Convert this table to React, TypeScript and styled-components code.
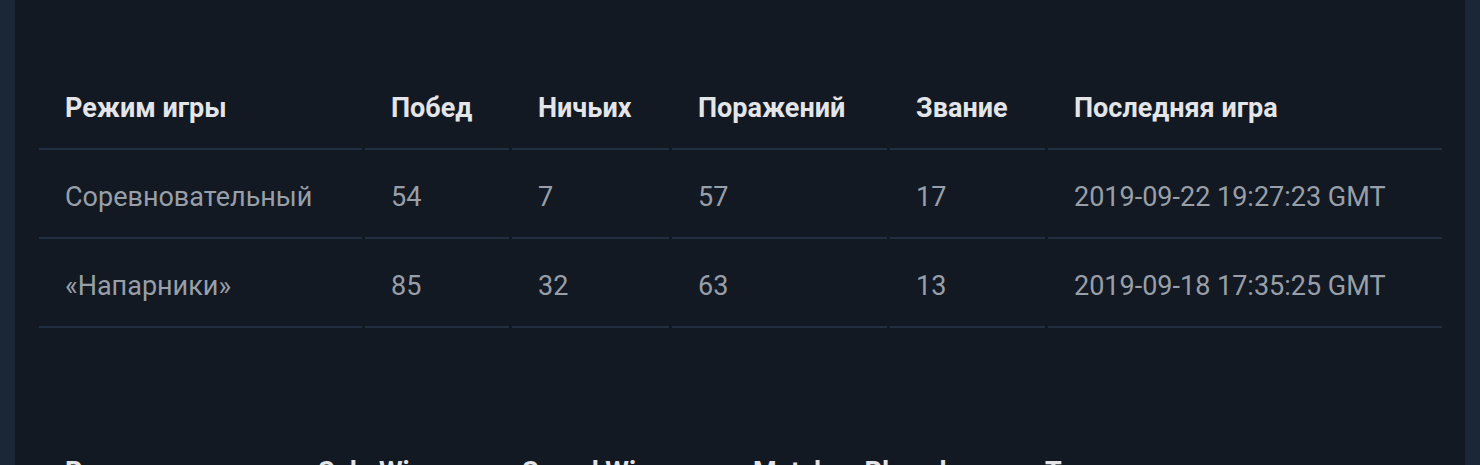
import React from "react";
import styled, { createGlobalStyle } from "styled-components";

const GlobalStyle = createGlobalStyle`
  html, body {
    margin: 0;
    padding: 0;
    background: #1b2636;
  }
  body {
    font-family: Roboto, "Liberation Sans", Arial, sans-serif;
  }
`;

const Page = styled.div`
  padding: 0 15px;
  min-height: 600px;
`;

const Panel = styled.main`
  background: #131922;
  padding: 64px 21px 40px;
  display: flex;
  flex-direction: column;
  gap: 100px;
  min-height: 600px;
`;

const Table = styled.table`
  width: 100%;
  table-layout: fixed;
  border-collapse: separate;
  border-spacing: 3px;
  margin: -3px 0;
`;

const HeadCell = styled.th`
  text-align: left;
  font-weight: 700;
  font-size: 27px;
  line-height: 33px;
  color: #e3e5e8;
  padding: 28px 16px 23px 26px;
  border-bottom: 2px solid #212f40;
  white-space: nowrap;
  overflow: hidden;
`;

const Cell = styled.td`
  text-align: left;
  font-weight: 400;
  font-size: 27px;
  line-height: 33px;
  color: #989fa8;
  padding: 28px 16px 23px 26px;
  border-bottom: 2px solid #212f40;
  white-space: nowrap;
`;

type Col = { title: string; width: number };

const modeCols: Col[] = [
  { title: "Режим игры", width: 323 },
  { title: "Побед", width: 144 },
  { title: "Ничьих", width: 157 },
  { title: "Поражений", width: 215 },
  { title: "Звание", width: 155 },
  { title: "Последняя игра", width: 394 },
];

const modeRows = [
  ["Соревновательный", "54", "7", "57", "17", "2019-09-22 19:27:23 GMT"],
  ["«Напарники»", "85", "32", "63", "13", "2019-09-18 17:35:25 GMT"],
];

const otherCols: Col[] = [
  { title: "Режим игры", width: 250 },
  { title: "Solo Wins", width: 201 },
  { title: "Squad Wins", width: 228 },
  { title: "Matches Played", width: 289 },
  { title: "Top", width: 423 },
];

const StatsTable: React.FC<{ cols: Col[]; rows: string[][] }> = ({ cols, rows }) => (
  <Table>
    <colgroup>
      {cols.map((c) => (
        <col key={c.title} style={{ width: c.width }} />
      ))}
    </colgroup>
    <thead>
      <tr>
        {cols.map((c) => (
          <HeadCell key={c.title}>{c.title}</HeadCell>
        ))}
      </tr>
    </thead>
    <tbody>
      {rows.map((r, i) => (
        <tr key={i}>
          {r.map((v, j) => (
            <Cell key={j}>{v}</Cell>
          ))}
        </tr>
      ))}
    </tbody>
  </Table>
);

export default function App() {
  return (
    <>
      <GlobalStyle />
      <Page>
        <Panel>
          <StatsTable cols={modeCols} rows={modeRows} />
          <StatsTable cols={otherCols} rows={[["Solo", "12", "4", "96", "31"]]} />
        </Panel>
      </Page>
    </>
  );
}
